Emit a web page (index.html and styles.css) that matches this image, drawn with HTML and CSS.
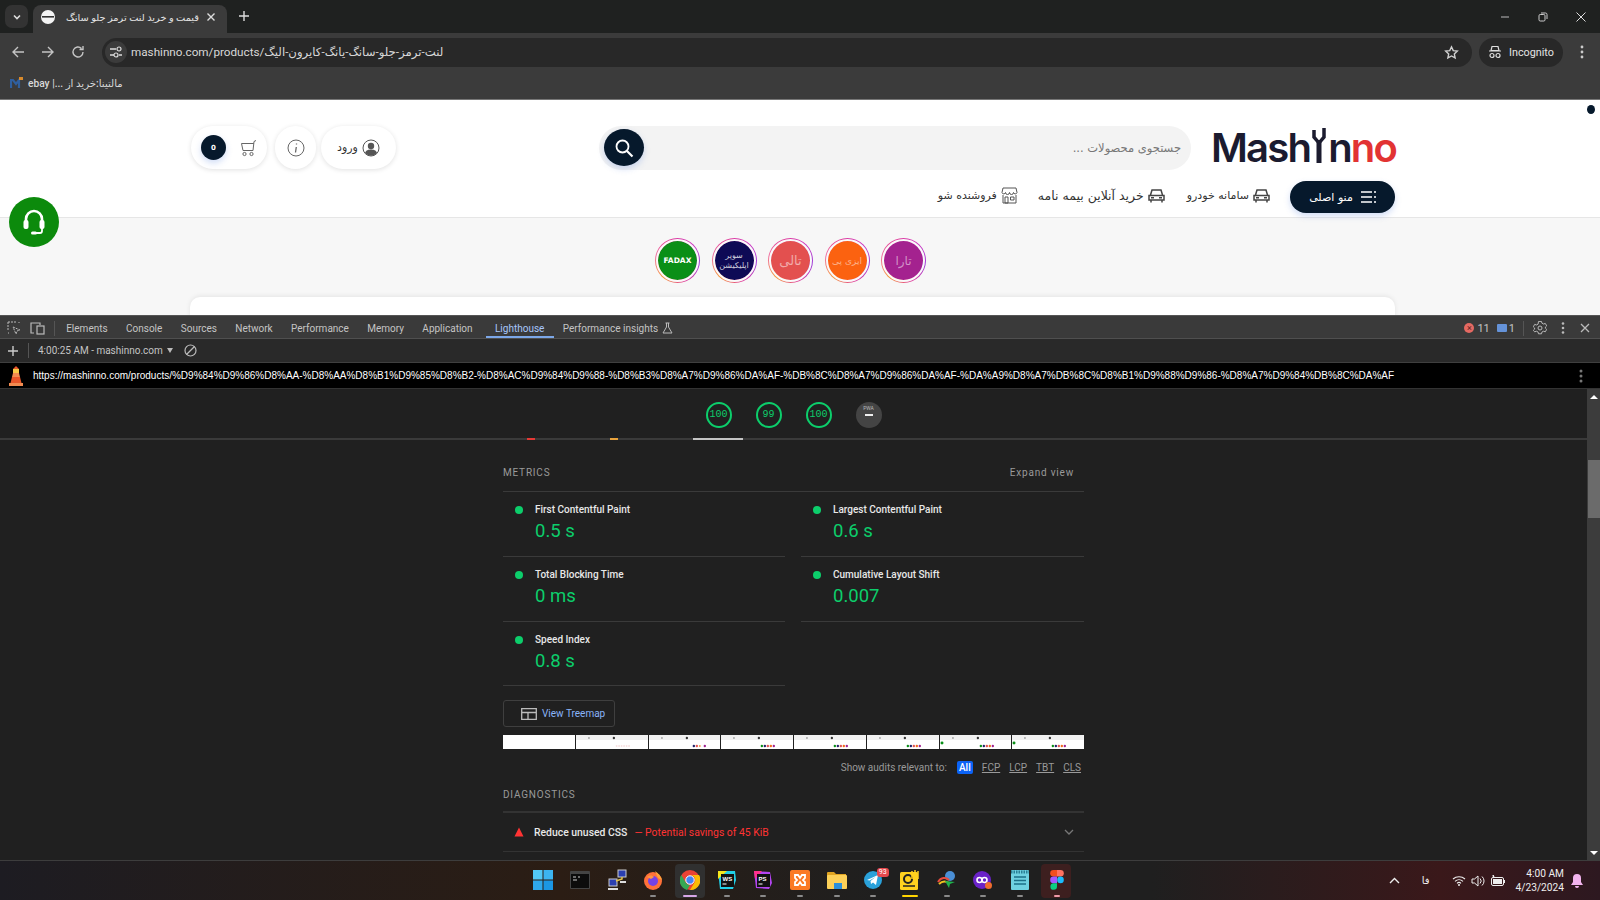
FILE: index.html
```html
<!DOCTYPE html>
<html lang="en">
<head>
  <meta charset="UTF-8">
  <meta name="viewport" content="width=device-width, initial-scale=1.0">
  <title>Lighthouse report</title>
  <link rel="stylesheet" href="styles.css">
</head>
<body>
  <!-- Browser chrome -->
  <div class="tabstrip">
    <div class="tab-search"><svg width="10" height="10" viewBox="0 0 10 10"><path d="M2 3.500l3 3 3-3" fill="none" stroke="#ddd" stroke-width="1.600"/></svg></div>
    <div class="tab">
      <svg class="tab-favicon" width="16" height="16" viewBox="0 0 16 16"><circle cx="8" cy="8" r="7" fill="#f4f4f4"/><rect x="2" y="7" width="12" height="1.600" fill="#333"/></svg>
      <span class="tab-title" dir="rtl">قیمت و خرید لنت ترمز جلو سانگ</span>
      <svg class="tab-close" width="10" height="10" viewBox="0 0 10 10"><path d="M1.500 1.500l7 7M8.500 1.500l-7 7" stroke="#ddd" stroke-width="1.400"/></svg>
    </div>
    <svg class="new-tab" width="12" height="12" viewBox="0 0 12 12"><path d="M6 1v10M1 6h10" stroke="#ddd" stroke-width="1.400"/></svg>
    <div class="window-controls">
      <svg width="10" height="10" viewBox="0 0 10 10"><path d="M1 5h8" stroke="#bbb"/></svg>
      <svg width="10" height="10" viewBox="0 0 10 10"><rect x="1" y="2.500" width="6" height="6.500" rx="1.200" fill="none" stroke="#ccc"/><path d="M3 1h4.500A1.500 1.500 0 0 1 9 2.500V7" fill="none" stroke="#ccc"/></svg>
      <svg width="10" height="10" viewBox="0 0 10 10"><path d="M.5.500l9 9M9.500.500l-9 9" stroke="#ddd"/></svg>
    </div>
  </div>

  <div class="toolbar">
    <svg width="14" height="14" viewBox="0 0 14 14"><path d="M13 7H2M7 2L2 7l5 5" fill="none" stroke="#c4c4c4" stroke-width="1.400"/></svg>
    <svg width="14" height="14" viewBox="0 0 14 14"><path d="M1 7h11M7 2l5 5-5 5" fill="none" stroke="#c4c4c4" stroke-width="1.400"/></svg>
    <svg width="14" height="14" viewBox="0 0 14 14"><path d="M12 7a5 5 0 1 1-1.500-3.600M12 1v3.500H8.500" fill="none" stroke="#c4c4c4" stroke-width="1.400"/></svg>
    <div class="omnibox">
      <div class="site-info"><svg width="14" height="12" viewBox="0 0 14 12"><path d="M1 3h6M10 9h3M1 9h4" stroke="#ddd" stroke-width="1.300"/><circle cx="10" cy="3" r="2" fill="none" stroke="#ddd" stroke-width="1.200"/><circle cx="7" cy="9" r="2" fill="none" stroke="#ddd" stroke-width="1.200"/></svg></div>
      <span class="omni-url">mashinno.com/products/لنت-ترمز-جلو-سانگ-یانگ-کایرون-الیگ</span>
      <svg class="omni-star" width="15" height="15" viewBox="0 0 24 24"><path d="M12 3l2.800 6 6.500.8-4.800 4.400 1.300 6.500L12 17.500l-5.800 3.200 1.300-6.500L2.700 9.800 9.200 9z" fill="none" stroke="#d0d0d0" stroke-width="2.200"/></svg>
    </div>
    <div class="incognito">
      <svg width="14" height="14" viewBox="0 0 14 14"><path d="M4 1.500h6l1 4H3zM1 6h12" fill="none" stroke="#ddd" stroke-width="1.200"/><circle cx="4" cy="10.500" r="2" fill="none" stroke="#ddd" stroke-width="1.200"/><circle cx="10" cy="10.500" r="2" fill="none" stroke="#ddd" stroke-width="1.200"/></svg>
      Incognito
    </div>
    <svg class="chrome-menu" width="4" height="14" viewBox="0 0 4 14"><circle cx="2" cy="2" r="1.400" fill="#ccc"/><circle cx="2" cy="7" r="1.400" fill="#ccc"/><circle cx="2" cy="12" r="1.400" fill="#ccc"/></svg>
  </div>

  <div class="bookmarks">
    <svg width="14" height="12" viewBox="0 0 14 12"><path d="M1 11V3h2l3 4 3-4v8" fill="none" stroke="#2f5f9e" stroke-width="2.200"/><rect x="9" y="0" width="4" height="3" fill="#d98a2b"/></svg>
    <span class="bookmark-text" dir="rtl">مالتینا:خرید از ...| ebay</span>
  </div>

  <!-- Inspected page -->
  <div class="page" dir="rtl">
    <span class="scroll-dot"></span>
    <div class="site-header">
      <div class="header-row">
        <div class="logo" dir="ltr">Mash<svg class="logo-wrench" width="14" height="35" viewBox="0 0 14 35"><path d="M7 12v23" fill="none" stroke="#1b1b2f" stroke-width="5"/><path d="M7 15L2 9V2M7 15l5-6V0" fill="none" stroke="#1b1b2f" stroke-width="3.500"/></svg>n<span class="logo-red">no</span></div>
        <div class="search">
          <span class="search-text">جستجوی محصولات ...</span>
          <span class="search-btn"><svg width="20" height="20" viewBox="0 0 20 20"><circle cx="8.500" cy="8.500" r="6" fill="none" stroke="#fff" stroke-width="1.800"/><path d="M13 13l5.500 5.500" stroke="#fff" stroke-width="2.200"/></svg></span>
        </div>
        <div class="actions">
          <div class="pill login">
            <svg width="18" height="18" viewBox="0 0 18 18"><circle cx="9" cy="9" r="8" fill="#fff" stroke="#555"/><circle cx="9" cy="7" r="3.200" fill="#555"/><path d="M3 14c1-3 3.500-3.500 6-3.500s5 .5 6 3.500a8 8 0 0 1-12 0z" fill="#555"/></svg>
            ورود
          </div>
          <div class="pill info"><svg width="18" height="18" viewBox="0 0 18 18"><circle cx="9" cy="9" r="8" fill="none" stroke="#666"/><path d="M9.500 4.500v1M9.300 8l-.8 5.500" stroke="#666" stroke-width="1.300"/></svg></div>
          <div class="pill cart">
            <svg width="18" height="18" viewBox="0 0 18 18"><path d="M17 1.500l-2 1-1 9H4L2.500 4.500H14.800" fill="none" stroke="#666"/><circle cx="5.500" cy="15" r="1.600" fill="none" stroke="#666"/><circle cx="12.500" cy="15" r="1.600" fill="none" stroke="#666"/></svg>
            <span class="cart-count">0</span>
          </div>
        </div>
      </div>
      <div class="nav-row">
        <div class="menu-btn">
          <svg width="15" height="12" viewBox="0 0 15 12"><path d="M0 1h11M0 6h11M0 11h11M13 1h2M13 6h2M13 11h2" stroke="#fff" stroke-width="1.300"/></svg>
          منو اصلی
        </div>
        <div class="nav-item"><svg width="17" height="14" viewBox="0 0 17 14"><path d="M2.500 6l1.500-5h9l1.500 5M1 6.500h15V11H1zM3 11v2.500M14 11v2.500" fill="none" stroke="#444" stroke-width="1.500"/><path d="M3 8.700h3M11 8.700h3" stroke="#444" stroke-width="1.500"/></svg>سامانه خودرو</div>
        <div class="nav-item nav-wide"><svg width="17" height="14" viewBox="0 0 17 14"><path d="M2.500 6l1.500-5h9l1.500 5M1 6.500h15V11H1zM3 11v2.500M14 11v2.500" fill="none" stroke="#444" stroke-width="1.500"/><path d="M3 8.700h3M11 8.700h3" stroke="#444" stroke-width="1.500"/></svg>خرید آنلاین بیمه نامه</div>
        <div class="nav-item"><svg width="17" height="17" viewBox="0 0 17 17"><path d="M2 1h13l1 4.500a1.800 1.800 0 0 1-3.500 0 1.800 1.800 0 0 1-4 0 1.800 1.800 0 0 1-4 0A1.800 1.800 0 0 1 1 5.500zM2 8v8h13V8M4 10h3v6H4zM9.500 10H13v3H9.500z" fill="none" stroke="#555" stroke-width="1"/></svg>فروشنده شو</div>
      </div>
    </div>
    <div class="page-body">
      <div class="stories">
        <div class="story"><span class="story-inner tara">تارا</span></div>
        <div class="story"><span class="story-inner easy">ایزی پی</span></div>
        <div class="story"><span class="story-inner tali">تالی</span></div>
        <div class="story"><span class="story-inner super">سوپر<br>اپلیکیشن</span></div>
        <div class="story"><span class="story-inner fadax">FADAX</span></div>
      </div>
      <div class="page-card"></div>
    </div>
    <div class="support"><svg width="26" height="28" viewBox="0 0 26 28"><path d="M5 15V11a8 8 0 0 1 16 0v4" fill="none" stroke="#fff" stroke-width="2.600"/><rect x="2.500" y="12" width="5" height="9" rx="2" fill="#fff"/><rect x="18.500" y="12" width="5" height="9" rx="2" fill="#fff"/><path d="M21 20v3a2 2 0 0 1-2 2h-4" fill="none" stroke="#fff" stroke-width="1.800"/><rect x="10" y="23.500" width="6" height="3" rx="1.500" fill="#fff"/></svg></div>
  </div>

  <!-- DevTools -->
  <div class="devtools">
    <div class="dt-tabs">
      <svg class="dt-icon" width="14" height="14" viewBox="0 0 14 14"><path d="M1 1h8M1 1v8M12 1v1M1 12h1M6 6l7 3-3 1-1 3z" fill="none" stroke="#bbb" stroke-dasharray="2 1"/></svg>
      <svg class="dt-icon" width="15" height="13" viewBox="0 0 15 13"><path d="M4 11H1V1h9v2" fill="none" stroke="#bbb" stroke-width="1.200"/><rect x="7" y="4" width="7" height="8" fill="none" stroke="#bbb" stroke-width="1.200"/></svg>
      <span class="dt-sep"></span>
      <span class="dt-tab">Elements</span>
      <span class="dt-tab">Console</span>
      <span class="dt-tab">Sources</span>
      <span class="dt-tab">Network</span>
      <span class="dt-tab">Performance</span>
      <span class="dt-tab">Memory</span>
      <span class="dt-tab">Application</span>
      <span class="dt-tab is-active">Lighthouse</span>
      <span class="dt-tab">Performance insights <svg width="11" height="12" viewBox="0 0 11 12"><path d="M3.500 1h4M4.500 1v4L1 11h9L6.500 5V1" fill="none" stroke="#bbb"/></svg></span>
      <div class="dt-status">
        <span class="err-dot">×</span><span class="err-count">11</span>
        <span class="msg-icon"></span><span class="msg-count">1</span>
        <span class="dt-sep"></span>
        <svg width="14" height="14" viewBox="0 0 14 14"><path d="M5.500 1h3l.4 1.800 1.600.9 1.800-.6 1.400 2.500-1.300 1.300v1.200l1.300 1.300-1.400 2.500-1.800-.6-1.600.9-.4 1.800h-3l-.4-1.800-1.600-.9-1.800.6L.3 10.400l1.300-1.300V7.900L.3 6.600l1.400-2.500 1.800.6 1.600-.9z" transform="translate(0 -.5) scale(1 .95)" fill="none" stroke="#bbb"/><circle cx="7" cy="7" r="2" fill="none" stroke="#bbb"/></svg>
        <svg class="dt-more" width="4" height="12" viewBox="0 0 4 12"><circle cx="2" cy="1.500" r="1.300" fill="#bbb"/><circle cx="2" cy="6" r="1.300" fill="#bbb"/><circle cx="2" cy="10.500" r="1.300" fill="#bbb"/></svg>
        <svg width="10" height="10" viewBox="0 0 10 10"><path d="M1 1l8 8M9 1l-8 8" stroke="#bbb" stroke-width="1.300"/></svg>
      </div>
    </div>
    <div class="dt-bar">
      <svg width="12" height="12" viewBox="0 0 12 12"><path d="M6 1v10M1 6h10" stroke="#ccc" stroke-width="1.400"/></svg>
      <span class="dt-sep"></span>
      <span class="dt-run">4:00:25 AM - mashinno.com</span>
      <span class="dt-caret"></span>
      <svg class="dt-clear" width="13" height="13" viewBox="0 0 13 13"><circle cx="6.500" cy="6.500" r="5.500" fill="none" stroke="#bbb" stroke-width="1.200"/><path d="M2.500 10.500l8-8" stroke="#bbb" stroke-width="1.200"/></svg>
    </div>
    <div class="lh-url">
      <svg width="14" height="20" viewBox="0 0 14 20"><path d="M7 0L4 3h6z" fill="#e8562a"/><rect x="4" y="3" width="6" height="4" fill="#f7c948"/><path d="M4 7h6l1 4H3z" fill="#f28b50"/><path d="M3 11h8l1.500 6h-11z" fill="#e8562a"/><rect x="0" y="17" width="14" height="3" fill="#f28b50"/></svg>
      <span class="lh-url-text">https://mashinno.com/products/%D9%84%D9%86%D8%AA-%D8%AA%D8%B1%D9%85%D8%B2-%D8%AC%D9%84%D9%88-%D8%B3%D8%A7%D9%86%DA%AF-%DB%8C%D8%A7%D9%86%DA%AF-%DA%A9%D8%A7%DB%8C%D8%B1%D9%88%D9%86-%D8%A7%D9%84%DB%8C%DA%AF</span>
      <svg class="lh-more" width="4" height="14" viewBox="0 0 4 14"><circle cx="2" cy="2" r="1.500" fill="#777"/><circle cx="2" cy="7" r="1.500" fill="#777"/><circle cx="2" cy="12" r="1.500" fill="#777"/></svg>
    </div>
    <div class="lh-main">
      <div class="lh-report">
        <div class="gauges">
          <span class="gauge">100</span>
          <span class="gauge">99</span>
          <span class="gauge">100</span>
          <span class="gauge-pwa"><small>PWA</small><b></b></span>
        </div>
        <div class="gauge-marks"><i class="mark-red"></i><i class="mark-orange"></i><i class="mark-white"></i></div>
        <div class="report-col">
          <div class="section-head"><span>METRICS</span><span class="expand">Expand view</span></div>
          <div class="metrics">
            <div class="metric"><span class="dot"></span><div><div class="metric-name">First Contentful Paint</div><div class="metric-value">0.5 s</div></div></div>
            <div class="metric"><span class="dot"></span><div><div class="metric-name">Largest Contentful Paint</div><div class="metric-value">0.6 s</div></div></div>
            <div class="metric"><span class="dot"></span><div><div class="metric-name">Total Blocking Time</div><div class="metric-value">0 ms</div></div></div>
            <div class="metric"><span class="dot"></span><div><div class="metric-name">Cumulative Layout Shift</div><div class="metric-value">0.007</div></div></div>
            <div class="metric"><span class="dot"></span><div><div class="metric-name">Speed Index</div><div class="metric-value">0.8 s</div></div></div>
            <div class="metric metric-empty"></div>
          </div>
          <div class="treemap-btn">
            <svg width="16" height="12" viewBox="0 0 16 12"><path d="M.7.700h14.600v10.600H.7zM.7 4.500h14.600M7 4.500v6.800" fill="none" stroke="#bbb" stroke-width="1.300"/></svg>
            View Treemap
          </div>
          <div class="filmstrip">
            <span class="frame"></span>
            <svg class="frame" viewBox="0 0 72 14"><rect width="72" height="5" fill="#f1f1f1"/><circle cx="13" cy="3" r="1" fill="#aaa"/><circle cx="38" cy="3" r="1.200" fill="#333"/><path d="M40 11h14" stroke="#f2c6c6" stroke-dasharray="1.500 1"/></svg>
            <svg class="frame" viewBox="0 0 72 14"><rect width="72" height="5" fill="#f1f1f1"/><circle cx="13" cy="3" r="1" fill="#aaa"/><circle cx="38" cy="3" r="1.200" fill="#333"/><circle cx="45" cy="11" r="1.200" fill="#24246a"/><circle cx="48" cy="11" r="1.200" fill="#e05555"/><circle cx="51" cy="11" r="1" fill="#f0a050"/><circle cx="56" cy="11" r="1.200" fill="#a0238f"/></svg>
            <svg class="frame" viewBox="0 0 72 14"><rect width="72" height="5" fill="#f1f1f1"/><circle cx="13" cy="3" r="1" fill="#aaa"/><circle cx="38" cy="3" r="1.200" fill="#333"/><g id="story-dots"><circle cx="41" cy="11" r="1.200" fill="#0a8f17"/><circle cx="44" cy="11" r="1.200" fill="#24246a"/><circle cx="47" cy="11" r="1.200" fill="#e05555"/><circle cx="50" cy="11" r="1.200" fill="#f26a1b"/><circle cx="53" cy="11" r="1.200" fill="#a0238f"/></g></svg>
            <svg class="frame" viewBox="0 0 72 14"><rect width="72" height="5" fill="#f1f1f1"/><circle cx="13" cy="3" r="1" fill="#aaa"/><circle cx="38" cy="3" r="1.200" fill="#333"/><use href="#story-dots"/></svg>
            <svg class="frame" viewBox="0 0 72 14"><rect width="72" height="5" fill="#f1f1f1"/><circle cx="13" cy="3" r="1" fill="#aaa"/><circle cx="38" cy="3" r="1.200" fill="#333"/><use href="#story-dots"/></svg>
            <svg class="frame" viewBox="0 0 72 14"><rect width="72" height="5" fill="#f1f1f1"/><circle cx="13" cy="3" r="1" fill="#aaa"/><circle cx="38" cy="3" r="1.200" fill="#333"/><circle cx="2" cy="8" r="1.500" fill="#0a8f17"/><use href="#story-dots"/></svg>
            <svg class="frame" viewBox="0 0 72 14"><rect width="72" height="5" fill="#f1f1f1"/><circle cx="13" cy="3" r="1" fill="#aaa"/><circle cx="38" cy="3" r="1.200" fill="#333"/><circle cx="2" cy="8" r="1.500" fill="#0a8f17"/><use href="#story-dots"/></svg>
          </div>
          <div class="audit-filter">
            <span class="filter-label">Show audits relevant to:</span>
            <span class="chip">All</span><a>FCP</a><a>LCP</a><a>TBT</a><a>CLS</a>
          </div>
          <div class="diag-title">DIAGNOSTICS</div>
          <div class="audit">
            <svg width="10" height="10" viewBox="0 0 10 10"><path d="M5 .5l4.500 9H.5z" fill="#ff3333"/></svg>
            <span class="audit-name">Reduce unused CSS</span>
            <span class="audit-saving">— Potential savings of 45 KiB</span>
            <svg class="audit-arrow" width="10" height="6" viewBox="0 0 10 6"><path d="M1 1l4 4 4-4" fill="none" stroke="#777" stroke-width="1.300"/></svg>
          </div>
        </div>
      </div>
      <div class="lh-scroll">
        <span class="arrow-up"></span>
        <span class="thumb"></span>
        <span class="arrow-down"></span>
      </div>
    </div>
  </div>

  <!-- Windows taskbar -->
  <div class="taskbar">
    <div></div>
    <div class="task-icons">
      <div class="task-item"><svg width="20" height="20" viewBox="0 0 20 20"><rect width="9.500" height="9.500" fill="#52c8f5"/><rect x="10.500" width="9.500" height="9.500" fill="#3cb4f0"/><rect y="10.500" width="9.500" height="9.500" fill="#2fa8ec"/><rect x="10.500" y="10.500" width="9.500" height="9.500" fill="#1b96e4"/></svg></div>
      <div class="task-item"><svg width="20" height="18" viewBox="0 0 20 18"><rect width="20" height="18" rx="1" fill="#444"/><rect x="1" y="3" width="18" height="14" fill="#0c0c0c"/><path d="M3 6h3M8 6h2M3 9h4" stroke="#ccc"/></svg></div>
      <div class="task-item"><svg width="20" height="22" viewBox="0 0 20 22"><rect x="11" y="1" width="8" height="7" fill="#2b3fb0" stroke="#ccc"/><rect x="2" y="10" width="8" height="7" fill="#2b3fb0" stroke="#ccc"/><path d="M15 8v2l-6 2" fill="none" stroke="#e3c34a" stroke-width="1.500"/><path d="M1 20h10" stroke="#ddd" stroke-width="2"/><path d="M13 13h6" stroke="#ddd" stroke-width="2"/></svg></div>
      <div class="task-item"><svg width="20" height="20" viewBox="0 0 20 20"><circle cx="10" cy="11" r="9" fill="#ff7139"/><path d="M12 1c3 2 6 5 7 9l-4-2z" fill="#ffa436"/><circle cx="10" cy="11" r="5" fill="#7542e5"/><path d="M4 7c2-2 5-2 7 0l-3 2z" fill="#ff9640"/></svg><i class="run-dot"></i></div>
      <div class="task-item is-open"><svg width="20" height="20" viewBox="0 0 20 20"><circle cx="10" cy="10" r="10" fill="#ea4335"/><path d="M10 5h9a10 10 0 0 1-9 15l4.500-7.500A5 5 0 0 0 10 5z" fill="#fbbc05"/><path d="M1.300 5L6 13a5 5 0 0 0 4 2l-3 5A10 10 0 0 1 1.300 5z" fill="#34a853"/><circle cx="10" cy="10" r="4.200" fill="#4285f4" stroke="#fff" stroke-width="1"/></svg><i class="run-bar"></i></div>
      <div class="task-item"><svg width="20" height="20" viewBox="0 0 20 20"><path d="M1 1h17l1 9-3 9H3z" fill="#21d0e8"/><path d="M1 1h9l-9 8z" fill="#f8e71c"/><rect x="4" y="4" width="13" height="13" fill="#111"/><text x="5.500" y="11" font-size="6" font-weight="700" font-family="Liberation Sans" fill="#fff">WS</text><path d="M5.500 14h4" stroke="#fff"/></svg><i class="run-dot"></i></div>
      <div class="task-item"><svg width="20" height="20" viewBox="0 0 20 20"><path d="M1 1l16 1 2 11-3 6-13-1z" fill="#b345f1"/><path d="M1 1h8L2 9z" fill="#ff318c"/><rect x="4" y="4" width="13" height="13" fill="#111"/><text x="5.500" y="11" font-size="6" font-weight="700" font-family="Liberation Sans" fill="#fff">PS</text><path d="M5.500 14h4" stroke="#fff"/></svg><i class="run-dot"></i></div>
      <div class="task-item"><svg width="20" height="20" viewBox="0 0 20 20"><rect width="20" height="20" rx="2" fill="#fb7a24"/><path d="M5 5h3l2 3 2-3h3v3l-2 2 2 2v3h-3l-2-3-2 3H5v-3l2-2-2-2z" fill="none" stroke="#fff" stroke-width="1.800"/></svg><i class="run-dot"></i></div>
      <div class="task-item"><svg width="20" height="18" viewBox="0 0 20 18"><path d="M0 2a1 1 0 0 1 1-1h6l2 2h10v2H0z" fill="#e0a422"/><rect y="4" width="20" height="14" rx="1" fill="#fcd058"/><rect x="7" y="12" width="8" height="6" fill="#2a8fdc"/></svg><i class="run-dot"></i></div>
      <div class="task-item"><svg width="20" height="20" viewBox="0 0 20 20"><circle cx="10" cy="10" r="9" fill="#2aa1da"/><path d="M4 10l11-5-2 10-3-2.500L8 14l-.5-3 5-4-6 3.500z" fill="#fff"/></svg><span class="tg-badge">93</span><i class="run-dot"></i></div>
      <div class="task-item"><svg width="20" height="20" viewBox="0 0 20 20"><rect y="2" width="18" height="18" rx="1.500" fill="#ffd21f"/><circle cx="8" cy="9" r="4" fill="none" stroke="#222" stroke-width="2"/><path d="M12 1v8M15 0v8M18 1v8" stroke="#ffd21f" stroke-width="1.500"/><path d="M3 16h12" stroke="#222" stroke-width="1.500"/></svg><i class="run-bar run-yellow"></i></div>
      <div class="task-item"><svg width="20" height="20" viewBox="0 0 20 20"><circle cx="13" cy="6" r="5" fill="#4a8fd6"/><path d="M1 12c3-5 8-5 11-2" fill="none" stroke="#e64a3c" stroke-width="2"/><path d="M2 14c3-3 7-3 10-1" fill="none" stroke="#f0c020" stroke-width="2"/><path d="M8 11l10 1-5 2-1 4z" fill="#1fb14a"/></svg><i class="run-dot"></i></div>
      <div class="task-item"><svg width="20" height="20" viewBox="0 0 20 20"><circle cx="9" cy="10" r="9" fill="#6a22c8"/><circle cx="6.500" cy="10" r="2.500" fill="none" stroke="#fff" stroke-width="1.600"/><circle cx="11.500" cy="10" r="2.500" fill="none" stroke="#fff" stroke-width="1.600"/><circle cx="15.500" cy="15.500" r="3.500" fill="#ef6c2e"/></svg><i class="run-dot"></i></div>
      <div class="task-item"><svg width="18" height="20" viewBox="0 0 18 20"><rect width="18" height="20" rx="1" fill="#6fd0e0"/><path d="M0 2h18" stroke="#2a7f95" stroke-width="3" stroke-dasharray="1.500 1"/><path d="M3 7h12M3 10.500h12M3 14h12" stroke="#1d6f86" stroke-width="1.400"/></svg><i class="run-dot"></i></div>
      <div class="task-item is-pinned"><svg width="14" height="20" viewBox="0 0 14 20"><path d="M7 0H3.500a3.300 3.300 0 0 0 0 6.600H7z" fill="#f24e1e"/><path d="M7 0h3.500a3.300 3.300 0 0 1 0 6.600H7z" fill="#ff7262"/><path d="M7 6.600H3.500a3.300 3.300 0 0 0 0 6.600H7z" fill="#a259ff"/><circle cx="10.500" cy="9.900" r="3.300" fill="#1abcfe"/><path d="M3.500 13.200H7v3.300a3.300 3.300 0 1 1-3.500-3.300z" fill="#0acf83"/></svg><i class="run-pink"></i></div>
    </div>
    <div class="tray">
      <svg class="tray-chevron" width="11" height="7" viewBox="0 0 11 7"><path d="M1 6l4.500-4.500L10 6" fill="none" stroke="#eee" stroke-width="1.400"/></svg>
      <span class="tray-lang">فا</span>
      <svg class="tray-wifi" width="14" height="11" viewBox="0 0 14 11"><path d="M1 4a9 9 0 0 1 12 0M3 6.300a6 6 0 0 1 8 0M5 8.300a3 3 0 0 1 4 0" fill="none" stroke="#eee" stroke-width="1.100"/><circle cx="7" cy="10" r="1" fill="#eee"/></svg>
      <svg class="tray-vol" width="14" height="12" viewBox="0 0 14 12"><path d="M1 4h2.500L7 1v10L3.500 8H1z" fill="none" stroke="#eee"/><path d="M9 3.500a3.500 3.500 0 0 1 0 5M11 1.500a6 6 0 0 1 0 9" fill="none" stroke="#eee"/></svg>
      <svg class="tray-bat" width="15" height="11" viewBox="0 0 15 11"><rect x=".5" y="2.500" width="12" height="8" rx="1.500" fill="none" stroke="#eee"/><rect x="2" y="4" width="9" height="5" fill="#eee"/><path d="M13.500 5v3" stroke="#eee"/><path d="M2 0l1 3" stroke="#eee" stroke-width="1.500"/></svg>
      <div class="tray-clock"><div>4:00 AM</div><div>4/23/2024</div></div>
      <svg class="tray-bell" width="12" height="14" viewBox="0 0 12 14"><path d="M6 0a4 4 0 0 1 4 4v4l2 3H0l2-3V4a4 4 0 0 1 4-4zM4 12h4a2 2 0 0 1-4 0z" fill="#f3b4ee"/></svg>
    </div>
  </div>
</body>
</html>
```

FILE: styles.css
```css
* {
  box-sizing: border-box;
}

body {
  margin: 0;
  width: 1600px;
  height: 900px;
  display: flex;
  flex-direction: column;
  overflow: hidden;
  background-color: #202020;
  font-family: "Roboto", "DejaVu Sans", sans-serif;
}

svg {
  flex-shrink: 0;
}

/* Browser chrome */
.tabstrip {
  height: 33px;
  display: flex;
  align-items: flex-end;
  background-color: #1f2120;
}

.tab-search {
  width: 23px;
  height: 23px;
  margin: 0 5px 5px 5px;
  border-radius: 7px;
  display: flex;
  align-items: center;
  justify-content: center;
  background-color: #333;
}

.tab {
  width: 194px;
  height: 28px;
  display: flex;
  align-items: center;
  padding: 0 9px 4px 6px;
  background-color: #3b3b3b;
  border-radius: 8px 8px 0 0;
}

.tab-favicon {
  margin-left: 1px;
}

.tab-title {
  width: 136px;
  margin: 0 7px;
  overflow: hidden;
  white-space: nowrap;
  font-size: 9.800px;
  color: #e4e4e4;
}

.new-tab {
  margin: 0 0 11px 11px;
}

.window-controls {
  margin-left: auto;
  height: 33px;
  display: flex;
  align-items: center;
  gap: 28px;
  padding-right: 14px;
}

.toolbar {
  height: 34px;
  display: flex;
  align-items: center;
  padding: 4px 0 0 11px;
  background-color: #3b3b3b;
}

.toolbar > svg:nth-child(2) {
  margin-left: 16px;
}

.toolbar > svg:nth-child(3) {
  margin-left: 16px;
}

.omnibox {
  width: 1370px;
  height: 29px;
  margin-left: 17px;
  display: flex;
  align-items: center;
  border-radius: 15px;
  background-color: #282828;
}

.site-info {
  width: 22px;
  height: 22px;
  margin-left: 3px;
  border-radius: 50%;
  display: flex;
  align-items: center;
  justify-content: center;
  background-color: #3b3b3b;
}

.omni-url {
  margin-left: 4px;
  font-size: 11.700px;
  color: #d8d8d8;
}

.omni-star {
  margin-left: auto;
  margin-right: 13px;
}

.incognito {
  width: 84px;
  height: 29px;
  margin-left: 7px;
  display: flex;
  align-items: center;
  justify-content: center;
  gap: 7px;
  border-radius: 15px;
  font-size: 10.800px;
  color: #e4e4e4;
  background-color: #282828;
}

.chrome-menu {
  margin-left: 17px;
}

.bookmarks {
  height: 33px;
  display: flex;
  align-items: center;
  gap: 4px;
  padding-left: 10px;
  background-color: #3b3b3b;
  border-bottom: 1px solid #777;
}

.bookmark-text {
  font-size: 10.200px;
  font-weight: 500;
  color: #d8d8d8;
}

/* Inspected page */
.page {
  position: relative;
  height: 215px;
  overflow: hidden;
  font-family: "DejaVu Sans", sans-serif;
  background-color: #f7f7f7;
}

.scroll-dot {
  position: absolute;
  top: 5px;
  right: 5px;
  width: 8px;
  height: 9px;
  border-radius: 50%;
  background-color: #06192c;
}

.site-header {
  height: 118px;
  padding: 25px 205px 0 190px;
  background-color: #fff;
  border-bottom: 1px solid #e6e6e6;
}

.header-row {
  display: flex;
  align-items: center;
  height: 45px;
}

.logo {
  width: 184px;
  display: flex;
  align-items: center;
  font-family: "Inter", sans-serif;
  font-size: 40px;
  font-weight: 600;
  letter-spacing: -1.800px;
  color: #1b1b2f;
}

.logo-wrench {
  margin: -4px 2px 0;
}

.logo-red {
  color: #e23333;
}

.search {
  width: 592px;
  height: 44px;
  margin-right: 20px;
  display: flex;
  align-items: center;
  justify-content: space-between;
  padding: 0 10px 0 5px;
  border-radius: 22px;
  background-color: #f3f3f3;
}

.search-text {
  font-size: 11.500px;
  color: #777;
}

.search-btn {
  width: 40px;
  height: 37px;
  border-radius: 50%;
  display: flex;
  align-items: center;
  justify-content: center;
  background-color: #06192c;
  box-shadow: 0 3px 6px rgba(70, 120, 220, 0.25);
}

.actions {
  margin-right: auto;
  margin-left: 1px;
  display: flex;
  align-items: center;
  gap: 5px;
}

.pill {
  height: 43px;
  display: flex;
  align-items: center;
  justify-content: center;
  border-radius: 22px;
  background-color: #fff;
  box-shadow: 0 1px 5px rgba(0, 0, 0, 0.12);
  font-size: 11px;
  color: #333;
}

.login {
  width: 75px;
  gap: 4px;
}

.info {
  width: 41px;
}

.cart {
  width: 76px;
  gap: 13px;
  margin-right: 3px;
}

.cart-count {
  width: 25px;
  height: 25px;
  border-radius: 50%;
  display: flex;
  align-items: center;
  justify-content: center;
  font-size: 7px;
  font-weight: 700;
  color: #fff;
  background-color: #06192c;
  box-shadow: 0 3px 6px rgba(70, 120, 220, 0.25);
}

.nav-row {
  display: flex;
  align-items: center;
  gap: 20px;
  margin-top: 11px;
}

.menu-btn {
  width: 105px;
  height: 32px;
  display: flex;
  align-items: center;
  justify-content: center;
  gap: 8px;
  border-radius: 16px;
  font-size: 11px;
  color: #fff;
  background-color: #06192c;
  box-shadow: 0 3px 6px rgba(70, 120, 220, 0.25);
}

.nav-item {
  display: flex;
  align-items: center;
  gap: 4px;
  padding-bottom: 3px;
  font-size: 11px;
  color: #333;
}

.nav-wide {
  margin-right: 2px;
  font-size: 12.500px;
}

.page-body {
  display: flex;
  flex-direction: column;
  align-items: center;
  padding-right: 15px;
}

.stories {
  display: flex;
  gap: 11.500px;
  margin: 20px 4px 0 0;
}

.story {
  width: 45px;
  height: 45px;
  padding: 1px;
  border-radius: 50%;
  background: conic-gradient(from 220deg, #f59a3c, #f0709c, #e0409a, #d03cc0, #9d3ad8, #e0409a, #f59a3c);
}

.story-inner {
  width: 100%;
  height: 100%;
  display: flex;
  align-items: center;
  justify-content: center;
  text-align: center;
  border-radius: 50%;
  border: 2px solid #fafafa;
  background-clip: padding-box;
  font-size: 12px;
  line-height: 10px;
  color: rgba(255, 255, 255, 0.5);
}

.tara { background-color: #a4228f; }
.easy { background-color: #fb6210; font-size: 9px; }
.tali { background-color: #e3504f; font-size: 13px; }
.super { background-color: #0e0a55; font-size: 8px; color: rgba(255, 255, 255, 0.8); }
.fadax { background-color: #0a8f17; font-size: 7.500px; font-weight: 700; color: #fff; }

.page-card {
  width: 1205px;
  height: 30px;
  margin-top: 14px;
  border-radius: 10px 10px 0 0;
  background-color: #fff;
  box-shadow: 0 -1px 5px rgba(0, 0, 0, 0.08);
}

.support {
  position: absolute;
  top: 97px;
  left: 9px;
  width: 50px;
  height: 50px;
  border-radius: 50%;
  display: flex;
  align-items: center;
  justify-content: center;
  background-color: #0c8a0c;
}

/* DevTools */
.devtools {
  height: 545px;
  display: flex;
  flex-direction: column;
  font-size: 10px;
  color: #c4c4c4;
}

.dt-tabs {
  height: 24px;
  display: flex;
  align-items: center;
  padding: 2px 0 0 7px;
  background-color: #3a3a3a;
  border-top: 1px solid #555;
  border-bottom: 1px solid #4f4f4f;
}

.dt-icon {
  margin-right: 9px;
}

.dt-sep {
  width: 1px;
  height: 15px;
  background-color: #555;
}

.dt-tabs > .dt-sep {
  margin: 0 2px 0 0;
}

.dt-tab {
  height: 20px;
  display: flex;
  align-items: center;
  gap: 4px;
  padding: 0 9.200px;
}

.dt-tab.is-active {
  margin-left: 4px;
  color: #a8c7fa;
  border-bottom: 2px solid #7ca7e8;
  padding-top: 2px;
}

.dt-status {
  margin-left: auto;
  display: flex;
  align-items: center;
  padding-right: 10px;
  font-size: 11px;
}

.err-dot {
  width: 10px;
  height: 10px;
  border-radius: 50%;
  display: flex;
  align-items: center;
  justify-content: center;
  font-size: 9px;
  line-height: 9px;
  color: #5c1f1f;
  background-color: #e46962;
}

.err-count {
  margin-left: 3px;
}

.msg-icon {
  width: 10px;
  height: 8px;
  margin-left: 7px;
  background-color: #6593d9;
  border-radius: 1px;
}

.msg-count {
  margin-left: 2px;
}

.dt-status .dt-sep {
  margin: 0 9px 0 8px;
}

.dt-more {
  margin: 0 15px 0 14px;
}

.dt-bar {
  height: 24px;
  display: flex;
  align-items: center;
  padding-left: 7px;
  background-color: #292929;
  border-bottom: 1px solid #3f3f3f;
}

.dt-bar .dt-sep {
  margin: 0 9px 0 9px;
}

.dt-caret {
  margin-left: 4px;
  border-left: 3.500px solid transparent;
  border-right: 3.500px solid transparent;
  border-top: 5px solid #bbb;
}

.dt-clear {
  margin-left: 11px;
}

.lh-url {
  height: 26px;
  display: flex;
  align-items: center;
  padding-left: 9px;
  color: #fff;
  background-color: #000;
  border-bottom: 1px solid #333;
}

.lh-url-text {
  margin-left: 10px;
  font-family: "Liberation Sans", sans-serif;
  font-size: 10px;
}

.lh-more {
  margin-left: auto;
  margin-right: 17px;
}

.lh-main {
  flex: 1;
  display: flex;
  min-height: 0;
  background-color: #202020;
}

.lh-report {
  flex: 1;
  overflow: hidden;
}

.gauges {
  height: 49px;
  padding-top: 2px;
  display: flex;
  align-items: center;
  justify-content: center;
  gap: 24px;
}

.gauge {
  width: 26px;
  height: 26px;
  border-radius: 50%;
  border: 2px solid #0cce6b;
  display: flex;
  align-items: center;
  justify-content: center;
  font-family: "Liberation Mono", monospace;
  font-size: 10px;
  color: #0cce6b;
}

.gauge-pwa {
  width: 26px;
  height: 26px;
  display: flex;
  flex-direction: column;
  align-items: center;
  border-radius: 50%;
  background-color: #444;
}

.gauge-pwa small {
  margin-top: 3px;
  font-size: 5px;
  color: #bbb;
}

.gauge-pwa b {
  width: 8px;
  height: 2px;
  margin-top: 3px;
  background-color: #eee;
}

.gauge-marks {
  height: 2px;
  display: flex;
  background-color: #3a3a3a;
}

.gauge-marks i {
  display: block;
  height: 2px;
}

.mark-red {
  width: 8px;
  margin-left: 527px;
  background-color: #e53935;
}

.mark-orange {
  width: 8px;
  margin-left: 75px;
  background-color: #e8a33d;
}

.mark-white {
  width: 50px;
  margin-left: 75px;
  background-color: #c4c4c4;
}

.report-col {
  width: 581px;
  margin: 0 auto;
}

.section-head {
  height: 52px;
  padding-top: 25px;
  display: flex;
  justify-content: space-between;
  padding-right: 10px;
  border-bottom: 1px solid #3a3a3a;
  line-height: 16px;
  color: #9a9a9a;
  letter-spacing: 0.8px;
}

.metrics {
  display: grid;
  grid-template-columns: 282px 283px;
  grid-template-rows: 65px 65px 64px;
  column-gap: 16px;
}

.metric {
  display: flex;
  padding: 10px 0 0 12px;
  gap: 12px;
  border-bottom: 1px solid #3a3a3a;
}

.metric-empty {
  border-bottom: none;
}

.dot {
  width: 8px;
  height: 8px;
  margin-top: 4px;
  border-radius: 50%;
  background-color: #0cce6b;
}

.metric-name {
  line-height: 16px;
  font-weight: 500;
  color: #e8e8e8;
}

.metric-value {
  margin-top: 1px;
  font-size: 18.500px;
  line-height: 24px;
  color: #0cce6b;
}

.treemap-btn {
  width: 112px;
  height: 27px;
  margin-top: 14px;
  display: flex;
  align-items: center;
  gap: 5px;
  padding-left: 17px;
  border: 1px solid #3f3f3f;
  border-radius: 3px;
  color: #8ab4f8;
}

.filmstrip {
  height: 14px;
  margin-top: 8px;
  display: flex;
  gap: 1px;
}

.frame {
  flex: 1;
  min-width: 0;
  height: 14px;
  display: block;
  background-color: #fff;
}

.audit-filter {
  height: 26px;
  margin-top: 5px;
  display: flex;
  align-items: center;
  justify-content: flex-end;
  gap: 7px;
  padding-right: 3px;
  color: #9a9a9a;
}

.filter-label {
  margin-right: 3px;
}

.audit-filter a {
  margin-left: 2px;
  text-decoration: underline;
}

.chip {
  width: 16px;
  height: 13px;
  display: flex;
  align-items: center;
  justify-content: center;
  border-radius: 2px;
  font-weight: 500;
  color: #fff;
  background-color: #0b63f6;
}

.diag-title {
  height: 33px;
  padding-top: 7px;
  line-height: 16px;
  letter-spacing: 0.8px;
  color: #9a9a9a;
  border-bottom: 2px solid #333;
}

.audit {
  height: 39px;
  display: flex;
  align-items: center;
  padding: 0 10px 0 11px;
  font-size: 10.400px;
  border-bottom: 1px solid #333;
}

.audit-name {
  margin-left: 10px;
  font-weight: 500;
  color: #e8e8e8;
}

.audit-saving {
  margin-left: 7px;
  color: #f33;
}

.audit-arrow {
  margin-left: auto;
}

.lh-scroll {
  width: 13px;
  display: flex;
  flex-direction: column;
  align-items: center;
  background-color: #3c3c3c;
}

.arrow-up {
  margin-top: 6px;
  border-left: 4px solid transparent;
  border-right: 4px solid transparent;
  border-bottom: 4px solid #fff;
}

.thumb {
  width: 12px;
  height: 58px;
  margin-top: 61px;
  background-color: #6b6b6b;
}

.arrow-down {
  margin-top: auto;
  margin-bottom: 5px;
  border-left: 4px solid transparent;
  border-right: 4px solid transparent;
  border-top: 4px solid #fff;
}

/* Windows taskbar */
.taskbar {
  height: 40px;
  display: grid;
  grid-template-columns: 1fr auto 1fr;
  background: linear-gradient(90deg, #1d1c22 0, #2b1d14 35%, #1f1f1f 55%, #1f1f1f 72%, #3a181a 90%, #2d1820 100%);
  border-top: 1px solid #3d3d3d;
}

.task-icons {
  display: flex;
}

.task-item {
  position: relative;
  width: 36.700px;
  display: flex;
  align-items: center;
  justify-content: center;
  padding-bottom: 2px;
}

.is-open::before,
.is-pinned::before {
  content: "";
  position: absolute;
  top: 3px;
  left: 3px;
  width: 30px;
  height: 34px;
  border-radius: 4px;
  background-color: #303030;
}

.is-pinned::before {
  background-color: #3d1f1f;
}

.task-item svg {
  position: relative;
}

.run-dot,
.run-bar,
.run-pink {
  position: absolute;
  left: 50%;
  bottom: 3px;
  width: 6px;
  height: 2px;
  margin-left: -3px;
  border-radius: 1px;
  background-color: #8a8a8a;
}

.run-bar {
  width: 14px;
  margin-left: -7px;
  background-color: #d6a7e8;
}

.run-yellow {
  width: 16px;
  margin-left: -8px;
  background-color: #ffd400;
}

.run-pink {
  background-color: #f09aa8;
}

.tg-badge {
  position: absolute;
  top: 7px;
  right: 3px;
  padding: 0 2px;
  border-radius: 3px;
  font-size: 7px;
  line-height: 9px;
  color: #fff;
  background-color: #e5484d;
}

.tray {
  display: flex;
  align-items: center;
  justify-content: flex-end;
  padding-right: 17px;
  color: #eee;
}

.tray-lang {
  margin-left: 22px;
  font-family: "DejaVu Sans", sans-serif;
  font-size: 10px;
}

.tray-wifi {
  margin-left: 22px;
}

.tray-vol {
  margin-left: 5px;
}

.tray-bat {
  margin-left: 6px;
}

.tray-clock {
  margin-left: 10px;
  text-align: right;
  font-size: 10.200px;
  line-height: 14px;
}

.tray-bell {
  margin-left: 7px;
}
```
